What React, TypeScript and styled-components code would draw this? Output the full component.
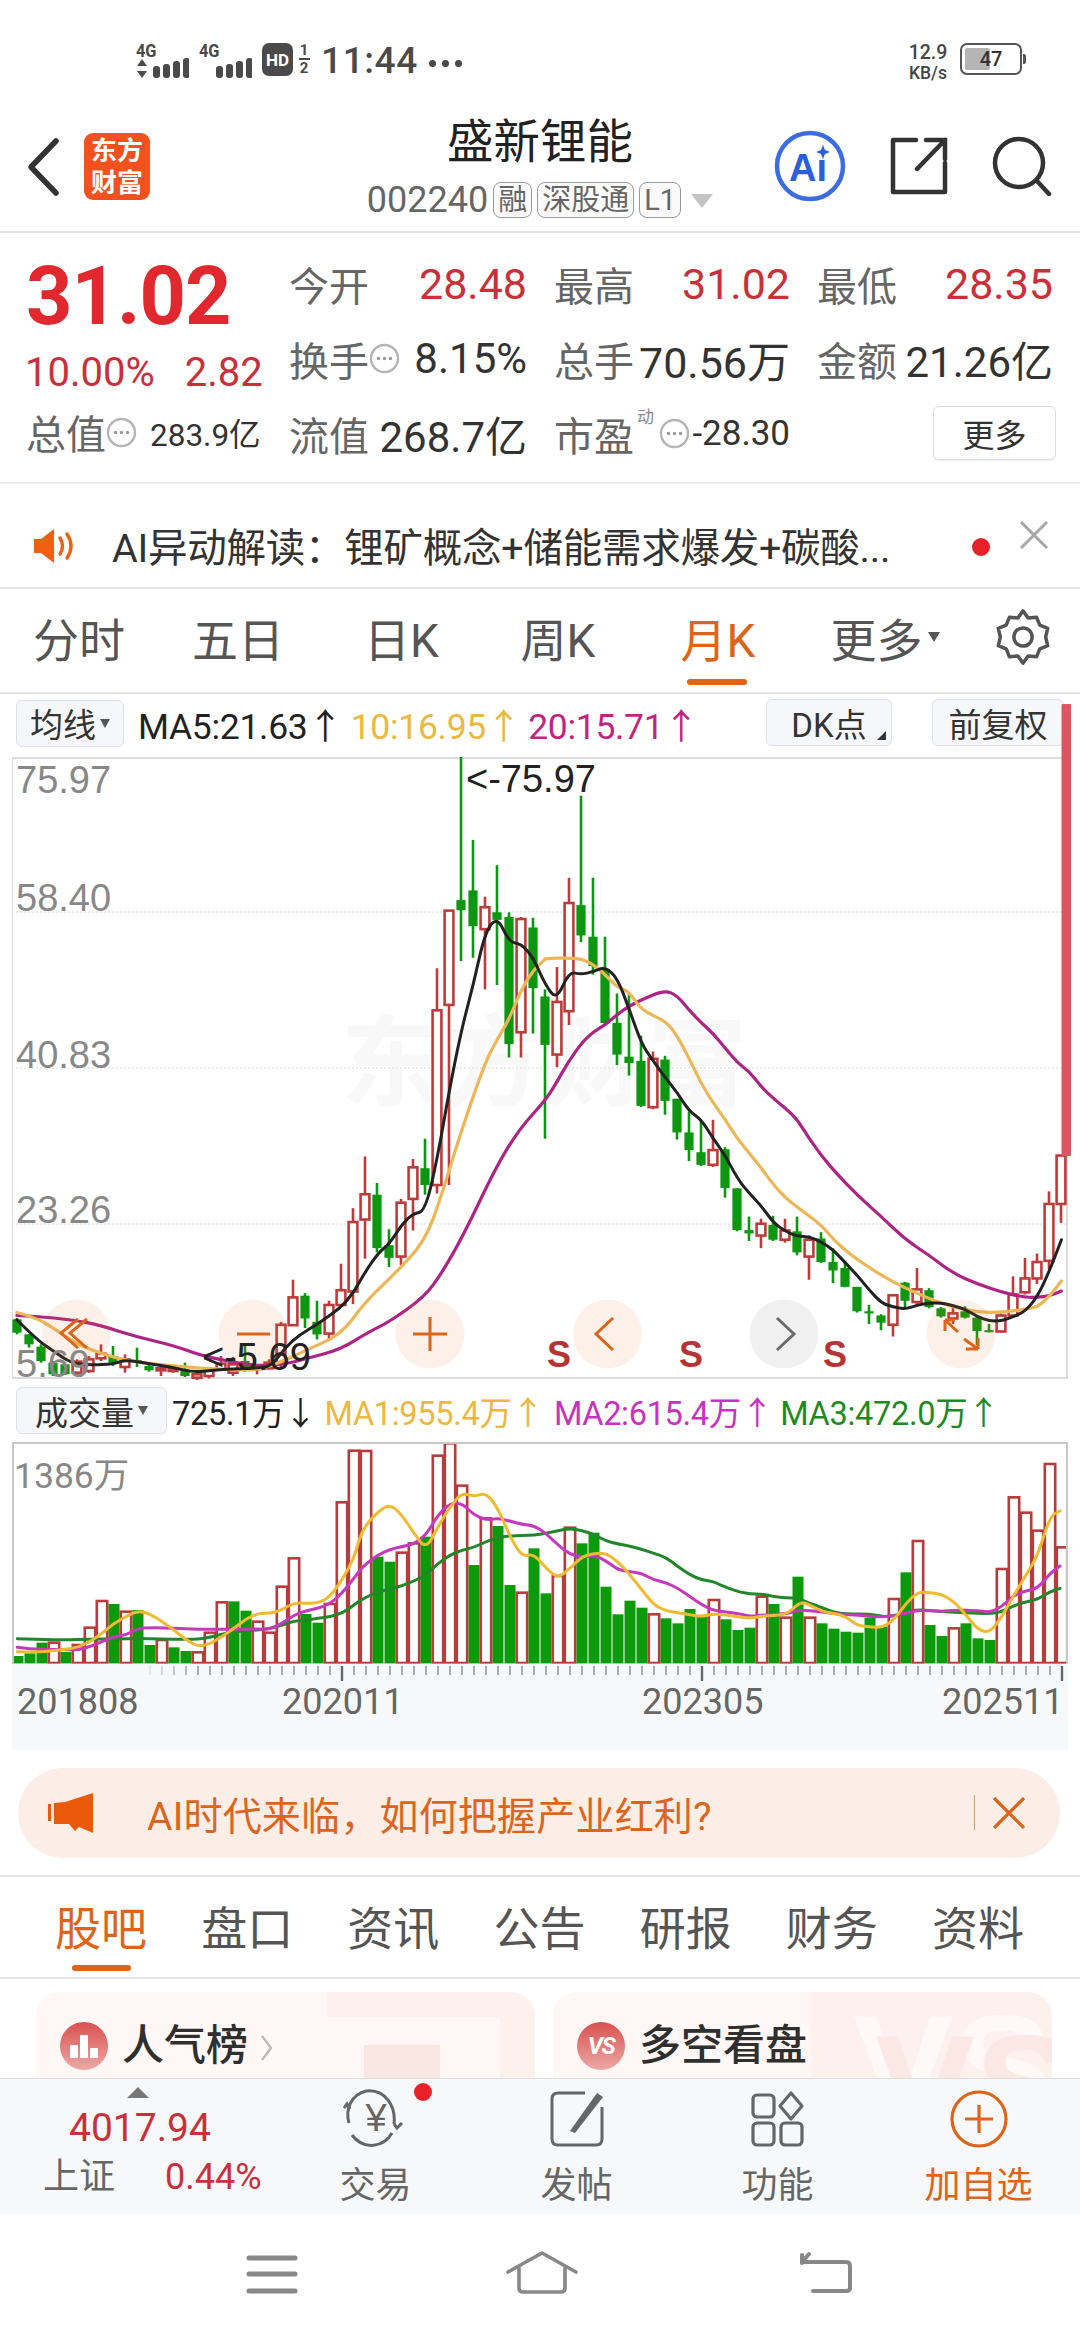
import React from 'react';
import styled, { createGlobalStyle } from 'styled-components';

const FONT = `Roboto, "Noto Sans CJK SC", sans-serif`;
const RED = '#C9303A';
const ORANGE = '#DD6418';

const Global = createGlobalStyle`
  html, body { margin: 0; padding: 0; background: #fff; }
  body { font-family: ${FONT}; overflow: hidden; }
  * { box-sizing: border-box; }
`;

/* ---------- chart data: values read off the picture ---------- */
type C = ['r' | 'g', number, number, number, number];
const z10 = (v: number) => 1280 + v / 3;
const z3 = (v: number) => 740 + v / 2.376;
const low: C[] = [
  ['g', 112, 115, 155, 160], ['g', 160, 160, 190, 200], ['g', 190, 197, 240, 245], ['g', 240, 245, 280, 285],
  ['g', 250, 250, 280, 282], ['r', 235, 242, 275, 285], ['r', 225, 235, 270, 275], ['r', 190, 218, 232, 240],
  ['g', 195, 225, 245, 255], ['r', 220, 235, 258, 275], ['g', 200, 237, 245, 258], ['g', 245, 255, 268, 272],
  ['r', 255, 262, 268, 285], ['r', 260, 262, 270, 275], ['g', 245, 265, 285, 288], ['r', 270, 280, 290, 297],
  ['r', 265, 268, 285, 292], ['r', 225, 248, 265, 268], ['r', 228, 250, 275, 285], ['g', 195, 240, 268, 272],
  ['r', 255, 258, 262, 280], ['r', 235, 245, 262, 265],
];
const high: C[] = [
  ['r', 1380, 1387, 1480, 1490], ['r', 1280, 1322, 1388, 1390], ['g', 1312, 1318, 1372, 1395], ['g', 1330, 1380, 1410, 1422],
  ['r', 1330, 1340, 1408, 1420], ['r', 1242, 1305, 1340, 1345], ['r', 1110, 1143, 1308, 1338], ['r', 987, 1077, 1137, 1230],
  ['g', 1050, 1078, 1205, 1215], ['g', 1160, 1198, 1228, 1250], ['r', 1088, 1097, 1225, 1245], ['r', 993, 1013, 1088, 1163],
  ['g', 945, 1015, 1055, 1078], ['r', 540, 640, 1055, 1075], ['r', 403, 403, 627, 1055], ['g', 38, 378, 402, 523],
  ['g', 235, 355, 440, 515], ['r', 370, 395, 447, 590], ['g', 295, 407, 425, 580], ['g', 407, 418, 720, 752],
  ['r', 418, 423, 692, 752], ['g', 420, 443, 587, 695], ['g', 590, 607, 722, 945], ['r', 537, 620, 745, 775],
  ['r', 325, 385, 642, 675], ['g', 130, 390, 462, 478], ['g', 325, 465, 535, 555], ['g', 465, 545, 670, 672],
  ['g', 600, 670, 745, 770], ['g', 600, 750, 765, 795], ['g', 700, 760, 867, 870], ['r', 738, 755, 870, 875],
  ['g', 748, 757, 855, 888], ['g', 850, 850, 930, 947], ['g', 880, 930, 972, 998], ['g', 900, 977, 1007, 1010],
  ['r', 900, 972, 1007, 1012], ['g', 965, 970, 1062, 1085], ['g', 1063, 1063, 1162, 1165], ['g', 1130, 1162, 1170, 1188],
  ['r', 1135, 1147, 1175, 1205], ['g', 1128, 1150, 1185, 1188], ['r', 1135, 1163, 1185, 1192], ['g', 1130, 1165, 1215, 1222],
  ['r', 1175, 1185, 1225, 1280], ['g', 1167, 1182, 1238, 1240], ['g', 1205, 1238, 1258, 1288], ['g', 1235, 1252, 1297, 1298],
  ['g', 1297, 1297, 1355, 1358], ['g', 1340, 1355, 1360, 1385], ['g', 1362, 1365, 1382, 1400], ['r', 1317, 1317, 1387, 1415],
  ['g', 1285, 1287, 1330, 1345], ['r', 1252, 1303, 1333, 1340], ['g', 1300, 1305, 1345, 1348], ['g', 1345, 1348, 1367, 1370],
  ['r', 1345, 1360, 1372, 1385], ['g', 1343, 1355, 1370, 1372], ['g', 1365, 1370, 1402, 1435], ['g', 1385, 1400, 1403, 1405],
  ['r', 1360, 1365, 1403, 1405], ['r', 1272, 1315, 1365, 1370], ['r', 1228, 1277, 1310, 1315], ['r', 1218, 1238, 1277, 1290],
  ['r', 1070, 1100, 1235, 1255], ['r', 985, 985, 1100, 1145],
];
const candles: C[] = [
  ...low.map(([t, a, b, c, d]) => [t, z10(a), z10(b), z10(c), z10(d)] as C),
  ...high.map(([t, a, b, c, d]) => [t, z3(a), z3(b), z3(c), z3(d)] as C),
];

type P = [number, number];
const left = (pts: P[]): P[] => pts.map(([x, y]) => [x / 2.8, z3(y)]);
const right = (pts: P[]): P[] => pts.map(([x, y]) => [520 + x / 2.8, z3(y)]);
const smooth = (pts: P[]) => {
  let d = `M${pts[0][0].toFixed(1)} ${pts[0][1].toFixed(1)}`;
  for (let i = 1; i < pts.length - 1; i++) {
    const mx = (pts[i][0] + pts[i + 1][0]) / 2;
    const my = (pts[i][1] + pts[i + 1][1]) / 2;
    d += ` Q${pts[i][0].toFixed(1)} ${pts[i][1].toFixed(1)} ${mx.toFixed(1)} ${my.toFixed(1)}`;
  }
  const e = pts[pts.length - 1];
  return `${d} L${e[0].toFixed(1)} ${e[1].toFixed(1)}`;
};

const ma5 = [
  ...left([[47,1375],[100,1420],[150,1450],[200,1478],[250,1483],[320,1480],[350,1470],[420,1480],[480,1487],[540,1500],[600,1495],[650,1492],[720,1490],[760,1485],[800,1440],[840,1410],[890,1385],[956,1345],[990,1310],[1020,1265],[1060,1215],[1090,1195],[1124,1150],[1157,1122],[1190,1118],[1225,990],[1258,830],[1291,690],[1325,580],[1358,455],[1392,417],[1426,478],[1460,482],[1493,515],[1527,580]]),
  ...right([[103,615],[137,548],[171,555],[204,548],[238,537],[272,562],[305,635],[340,720],[373,760],[407,800],[440,835],[474,880],[508,900],[541,945],[575,985],[609,1040],[642,1075],[676,1105],[710,1145],[743,1165],[777,1177],[810,1178],[844,1190],[878,1210],[911,1240],[945,1270],[978,1305],[1012,1335],[1045,1345],[1079,1350],[1112,1340],[1146,1335],[1180,1335],[1213,1342],[1247,1350],[1281,1368],[1314,1378],[1348,1378],[1381,1368],[1415,1355],[1449,1320],[1482,1260],[1516,1185]]),
];
const ma10 = [
  ...left([[47,1358],[100,1370],[150,1395],[200,1425],[250,1445],[320,1465],[400,1478],[480,1484],[560,1490],[650,1494],[720,1495],[790,1475],[850,1450],[956,1410],[1020,1335],[1100,1270],[1190,1190],[1240,1070],[1290,930],[1360,760],[1392,710],[1426,660],[1460,590],[1493,545],[1527,518]]),
  ...right([[70,517],[137,515],[171,518],[204,530],[238,555],[272,585],[305,595],[340,640],[407,665],[440,700],[474,755],[508,815],[541,860],[575,900],[609,945],[642,980],[676,1015],[710,1055],[743,1085],[777,1108],[844,1150],[878,1185],[911,1210],[945,1232],[1012,1270],[1079,1300],[1146,1325],[1213,1345],[1281,1357],[1348,1358],[1415,1350],[1449,1345],[1482,1320],[1516,1283]]),
];
const ma20 = [
  ...left([[47,1365],[100,1367],[200,1375],[280,1388],[380,1415],[490,1437],[560,1460],[650,1475],[720,1485],[800,1480],[860,1467],[956,1445],[1030,1405],[1090,1380],[1190,1320],[1240,1260],[1300,1170],[1390,1010],[1456,920]]),
  ...right([[70,855],[100,815],[137,760],[175,715],[204,692],[238,675],[272,650],[305,630],[340,615],[405,592],[440,605],[474,640],[508,670],[541,695],[575,730],[609,765],[642,785],[676,822],[710,850],[743,872],[777,900],[810,945],[844,985],[878,1020],[945,1080],[1012,1130],[1079,1185],[1146,1222],[1213,1265],[1281,1290],[1348,1310],[1415,1322],[1449,1322],[1482,1318],[1516,1307]]),
];

const volBars: ['r' | 'g', number][] = [
  ['g',648],['g',640],['g',608],['r',608],['g',636],['r',615],['r',563],['r',483],['g',492],['r',515],['g',510],['g',615],['r',600],['g',622],['g',633],['r',637],['r',578],['r',487],['g',484],['g',512],['r',545],['r',578],['r',440],['r',355],['g',522],['g',548],['r',492],['r',187],['r',32],
  ['r',33],['g',350],['g',365],['r',338],['r',310],['g',290],['r',47],['r',10],['r',137],['g',375],['r',235],['g',258],['g',435],['r',458],['g',325],['g',460],['r',408],['r',263],['g',310],['g',278],['g',440],['g',523],['g',482],['g',503],['r',523],['g',535],['g',550],['g',507],['g',530],['r',480],
  ['g',538],['g',570],['g',563],['r',470],['g',492],['r',533],['g',410],['r',533],['g',550],['g',566],['g',575],['g',578],['g',533],['g',560],['r',477],['g',397],['r',303],['g',555],['g',588],['r',565],['g',550],['g',595],['g',600],['r',387],['r',172],['r',218],['r',272],['r',72],['r',322],
];
const vz = (off: number, pts: P[]): P[] => pts.map(([x, y]) => [off + x / 3, 1440 + y / 3]);
const vma1 = [
  ...vz(0, [[52,635],[110,638],[180,630],[234,622],[270,605],[306,580],[342,550],[378,530],[414,512],[450,522],[486,545],[522,570],[558,600],[594,620],[630,612],[666,590],[702,565],[738,537],[774,520],[810,520],[846,510],[882,488],[918,490],[954,490],[990,470],[1026,420],[1062,355]]),
  ...vz(360, [[0,290],[18,255],[54,215],[90,192],[126,225],[162,280],[198,328],[234,260],[270,200],[306,158],[342,170],[378,158],[414,205],[450,290],[486,350],[522,342],[558,385],[594,415],[630,385],[666,350],[702,340],[738,340],[774,365],[810,405],[846,450],[882,495],[918,513],[954,518],[990,525],[1026,530],[1062,520]]),
  ...vz(720, [[54,530],[90,535],[126,528],[198,525],[234,492],[252,488],[270,495],[306,515],[342,520],[378,530],[414,558],[450,560],[486,563],[522,540],[558,490],[594,455],[630,458],[666,463],[702,485],[738,525],[774,570],[810,578],[846,530],[882,465],[918,405],[954,345],[990,228],[1020,213]]),
];
const vma2 = [
  ...vz(0, [[52,622],[90,628],[162,628],[234,630],[270,620],[306,605],[342,590],[378,585],[414,565],[450,563],[486,563],[558,567],[630,568],[702,568],[774,567],[810,568],[846,550],[882,525],[918,512],[954,505],[990,492],[1026,460],[1062,415]]),
  ...vz(360, [[0,390],[18,372],[54,345],[90,328],[126,320],[162,312],[198,285],[234,225],[270,190],[306,190],[342,225],[378,240],[414,235],[450,243],[486,253],[522,257],[558,280],[594,315],[630,343],[666,352],[702,345],[738,362],[774,390],[810,395],[846,400],[882,420],[918,428],[954,445],[990,470],[1026,495],[1062,512]]),
  ...vz(720, [[54,520],[90,530],[126,525],[198,522],[234,510],[306,515],[342,522],[414,525],[486,533],[558,520],[594,510],[666,515],[702,510],[774,512],[810,517],[846,500],[882,465],[918,452],[954,445],[990,400],[1020,378]]),
];
const vma3 = [
  ...vz(0, [[52,596],[126,598],[198,600],[270,597],[342,597],[414,595],[486,597],[558,598],[594,598],[630,592],[666,583],[702,575],[774,570],[810,565],[846,555],[882,543],[918,540],[954,535],[990,530],[1026,520],[1062,495]]),
  ...vz(360, [[0,482],[18,472],[54,455],[90,448],[126,437],[162,423],[198,405],[234,370],[270,345],[306,330],[342,322],[378,305],[414,293],[450,287],[486,287],[522,285],[558,280],[594,272],[630,265],[666,272],[702,283],[738,303],[774,312],[810,318],[846,328],[882,340],[918,352],[954,380],[990,405],[1026,420],[1062,425]]),
  ...vz(720, [[0,435],[54,455],[90,462],[126,462],[162,470],[198,473],[234,475],[270,490],[306,503],[342,517],[378,522],[450,522],[486,530],[522,528],[558,517],[594,508],[666,515],[738,518],[810,522],[846,515],[882,497],[918,485],[954,478],[990,455],[1020,445]]),
];

/* ---------- page skeleton ---------- */
const Page = styled.div`
  width: 1080px; height: 2340px; overflow: hidden; background: #fff; color: #222;
  display: flex; flex-direction: column;
`;

/* status bar */
const StatusBar = styled.div`
  height: 105px; display: flex; align-items: flex-start; padding: 43px 58px 0 136px; color: #4a4a4a;
`;
const Signal = styled.div`
  width: 53px; margin-right: 10px; display: flex; flex-direction: column; align-items: flex-start;
`;
const SignalLabel = styled.span`font-size: 19px; line-height: 15px; font-weight: 700; transform: scaleX(.86); transform-origin: left;`;
const HdBadge = styled.span`
  width: 31px; height: 33px; border-radius: 7px; background: #4a4a4a; color: #fff; font-size: 17px; font-weight: 700;
  display: flex; align-items: center; justify-content: center;
`;
const SimStack = styled.span`
  width: 16px; margin-left: 3px; margin-right: 9px; font-size: 15px; font-weight: 700; line-height: 15px; display: flex; flex-direction: column; align-items: center; height: 33px;
  & > i { width: 11px; height: 2px; background: #4a4a4a; margin: 1px 0; }
  & > span { line-height: 14px; }
`;
const Clock = styled.span`font-size: 37px; line-height: 33px; font-weight: 500; letter-spacing: .6px; margin-top: 1px;`;
const ClockDots = styled.span`display: flex; gap: 6px; margin: 17px 0 0 11px; & > i { width: 7px; height: 7px; border-radius: 50%; background: #4a4a4a; }`;
const StatusSpacer = styled.span`flex: 1;`;
const NetSpeed = styled.span`
  width: 46px; display: flex; flex-direction: column; align-items: center; font-size: 19.5px; line-height: 20px; margin-right: 9px; color: #444; font-weight: 500;
  & > small { font-size: 17.5px; line-height: 20px; }
`;
const Battery = styled.span`
  position: relative; width: 62px; height: 32px; border: 2px solid #555; border-radius: 7px; background: #fff; display: flex; align-items: center; justify-content: center;
  font-size: 20px; font-weight: 500; color: #333; overflow: visible;
  & > b { position: absolute; left: 3px; top: 3px; bottom: 3px; width: 25px; background: #b5b5b5; border-radius: 2px; }
  & > span { position: relative; }
  &::after { content: ''; position: absolute; right: -6px; top: 9px; width: 3px; height: 10px; background: #555; border-radius: 0 2px 2px 0; }
`;

/* header */
const Header = styled.header`
  height: 128px; border-bottom: 2px solid #e3e3e3; display: grid; grid-template-columns: 1fr auto 1fr; align-items: start;
`;
const HeaderLeft = styled.div`display: flex; align-items: flex-start; padding: 28px 0 0 26px; gap: 24px;`;
const Logo = styled.div`
  width: 66px; height: 67px; border-radius: 9px; background: #F4511E; color: #fff; font-size: 26px; line-height: 32px; font-weight: 700;
  display: flex; flex-direction: column; align-items: center; justify-content: center; letter-spacing: 0;
`;
const HeaderCenter = styled.div`display: flex; flex-direction: column; align-items: center; padding-top: 9px;`;
const Title = styled.h1`margin: 0; font-size: 46.5px; line-height: 56px; font-weight: 400; color: #222;`;
const SubRow = styled.div`display: flex; align-items: center; margin-top: 12px; height: 36px; color: #666; font-size: 36px;`;
const Tag = styled.span`
  height: 36px; margin-left: 5px; border: 1px solid #999; border-radius: 8px; padding: 0 4px; color: #666; font-size: 29px; line-height: 34px;
  background: #fafafa;
`;
const SubCaret = styled.i`
  margin-left: 10px; margin-top: 2px; width: 0; height: 0; border-left: 11px solid transparent; border-right: 11px solid transparent; border-top: 14px solid #c4c4c4;
`;
const HeaderRight = styled.div`display: flex; justify-content: flex-end; align-items: center; padding: 25px 28px 0 0; gap: 44px;`;

/* quote */
const Quote = styled.section`height: 251px; border-bottom: 2px solid #ececec; display: flex;`;
const QuoteLeft = styled.div`width: 289px; padding: 22px 0 0 26px; display: flex; flex-direction: column;`;
const BigPrice = styled.div`font-size: 81px; line-height: 84px; font-weight: 700; color: #E0282E; letter-spacing: -1px;`;
const ChangeRow = styled.div`display: flex; gap: 30px; margin-top: 12px; font-size: 40px; line-height: 44px; color: ${RED}; margin-left: -1px;`;
const CapRow = styled.div`display: flex; align-items: center; margin-top: 15px; height: 44px; color: #666; font-size: 40px;`;
const CapValue = styled.span`font-size: 31.5px; color: #333; margin-left: 13px; white-space: nowrap;`;
const QuoteGrid = styled.div`
  padding-top: 13px; display: grid; grid-template-columns: 238px 236px 236px; column-gap: 27px; grid-auto-rows: 75px; align-content: start;
`;
const Cell = styled.div`display: flex; align-items: center; justify-content: space-between; height: 75px;`;
const Lbl = styled.span`font-size: 40px; color: #666; white-space: nowrap;`;
const Val = styled.span<{ $red?: boolean; $size?: number }>`
  font-size: ${(p) => p.$size ?? 42}px; color: ${(p) => (p.$red ? RED : '#333')}; white-space: nowrap;
`;
const LabelWrap = styled.span`position: relative; display: flex; align-items: center;`;
const Sup = styled.sup`
  position: absolute; left: 83px; top: 3px; font-size: 17px; line-height: 18px; color: #888;
`;
const InfoSlot = styled.span`margin-left: 25px; display: flex;`;
const MoreBtn = styled.div`
  position: absolute; left: 933px; top: 406px; width: 123px; height: 54px; border: 1px solid #ddd; border-radius: 6px; background: #fff; color: #333; font-size: 32px;
  display: flex; align-items: center; justify-content: center; box-shadow: 0 1px 1px #eee;
`;

/* alert */
const Alert = styled.section`
  height: 105px; border-bottom: 2px solid #e6e6e6; display: flex; align-items: center; padding: 20px 0 0 34px; position: relative;
`;
const AlertText = styled.span`margin-left: 34px; font-size: 39.5px; color: #333; white-space: nowrap; margin-top: -2px; letter-spacing: -.25px;`;
const AlertDot = styled.i`
  position: absolute; left: 972px; top: 54px; width: 18px; height: 18px; border-radius: 50%; background: #E8202A;
`;
const AlertClose = styled.span`position: absolute; left: 1019px; top: 37px; display: flex;`;

/* period tabs */
const Periods = styled.nav`
  height: 105px; border-bottom: 2px solid #e3e3e3; display: grid; grid-template-columns: 158px 160px 167px 146px 174px 160px 115px;
`;
const Period = styled.div<{ $active?: boolean }>`
  position: relative; display: flex; align-items: center; justify-content: center; padding-bottom: 8px; font-size: 46px; color: ${(p) => (p.$active ? ORANGE : '#555')};
  ${(p) => p.$active && `&::after { content: ''; position: absolute; left: 50%; margin-left: -31px; bottom: 7px; width: 60px; height: 6px; border-radius: 3px; background: ${ORANGE}; }`}
`;
const PeriodCaret = styled.i`
  margin-left: 5px; width: 0; height: 0; border-left: 6px solid transparent; border-right: 6px solid transparent; border-top: 10px solid #555;
`;

/* indicator rows */
const IndRow = styled.div<{ $pb?: number }>`
  height: 63px; display: flex; align-items: center; padding: 0 0 ${(p) => p.$pb ?? 0}px 16px; position: relative; white-space: nowrap;
`;
const SelectBtn = styled.div<{ $w: number }>`
  width: ${(p) => p.$w}px; height: 47px; border: 1px solid #dfe1e6; border-radius: 6px; background: #f6f7fa; display: flex; align-items: center; justify-content: center; gap: 4px;
  font-size: 33px; color: #333;
`;
const MiniCaret = styled.i`width: 0; height: 0; border-left: 5px solid transparent; border-right: 5px solid transparent; border-top: 9px solid #555;`;
const IndText = styled.span<{ $c: string; $ml: number; $size: number }>`
  color: ${(p) => p.$c}; margin-left: ${(p) => p.$ml}px; font-size: ${(p) => p.$size}px; letter-spacing: -.3px;
`;
const IndRight = styled.div`position: absolute; left: 766px; top: 5px; display: flex; gap: 40px;`;
const FlagBtn = styled.div<{ $w: number }>`
  position: relative; width: ${(p) => p.$w}px; height: 47px; border: 1px solid #dfe1e6; border-radius: 6px; background: #f6f7fa; color: #333; font-size: 33px;
  display: flex; align-items: center; justify-content: center; 
`;
const CornerMark = styled.i`
  position: absolute; right: 5px; bottom: 5px; width: 0; height: 0; border-left: 9px solid transparent; border-bottom: 9px solid #333;
`;

/* charts */
const ChartBox = styled.div`
  position: relative; z-index: 2; margin-left: 12px; width: 1056px; height: 622px; border: 1px solid #dcdcdc; border-width: 2px 2px 2px 1px;
  & > svg { position: absolute; left: -1px; top: -2px; overflow: visible; }
`;
const Watermark = styled.div`
  position: absolute; left: 328px; top: 245px; font-size: 100px; line-height: 120px; font-weight: 700; color: #f8f8f8; white-space: nowrap; letter-spacing: 2px;
`;
const AxisLabel = styled.span<{ $y: number }>`
  position: absolute; left: 3px; top: ${(p) => p.$y}px; transform: translateY(-50%); font-size: 38px; color: #888; line-height: 1; font-family: "Liberation Sans", ${FONT};
`;
const Extreme = styled.span<{ $x: number; $y: number }>`
  position: absolute; left: ${(p) => p.$x}px; top: ${(p) => p.$y}px; transform: translateY(-50%); font-size: 38px; line-height: 1; color: #222; white-space: nowrap; font-family: "Liberation Sans", ${FONT};
`;
const SMark = styled.span<{ $x: number }>`
  position: absolute; left: ${(p) => p.$x}px; top: 578px; font-size: 36px; line-height: 36px; font-weight: 700; color: #B73434; font-family: "Liberation Sans", ${FONT};
`;
const VolBox = styled.div`
  position: relative; margin-left: 12px; width: 1056px; height: 222px; border: 1px solid #c8c8c8; border-width: 2px 2px 0 2px; overflow: hidden;
  & > svg { position: absolute; left: -2px; top: -2px; }
`;
const VolMax = styled.span`position: absolute; left: 0; top: 13px; font-size: 35.5px; line-height: 38px; color: #888;`;
const AxisBand = styled.div`position: relative; margin-left: 12px; width: 1056px; height: 86px; background: #f7f8fa; & > svg { position: absolute; left: 0; top: 0; }`;
const AxisDate = styled.span<{ $x: number }>`position: absolute; left: ${(p) => p.$x}px; top: 18px; font-size: 36px; line-height: 40px; color: #666;`;

/* banner */
const Banner = styled.div`
  margin: 18px 20px 0 18px; height: 90px; border-radius: 45px; background: #FCEEE6; display: flex; align-items: center; padding-left: 30px; position: relative;
`;
const BannerText = styled.span`margin-left: 53px; font-size: 39px; color: #DB651F; white-space: nowrap; letter-spacing: .2px;`;
const BannerRule = styled.i`position: absolute; left: 956px; top: 27px; width: 1px; height: 35px; background: #c9a080;`;
const BannerClose = styled.span`position: absolute; left: 974px; top: 29px; display: flex;`;

/* section tabs */
const Sections = styled.nav`
  margin-top: 17px; height: 104px; border-top: 2px solid #e6e6e6; border-bottom: 2px solid #e6e6e6; display: grid; grid-template-columns: repeat(7, 1fr); padding: 0 29px 0 28px;
`;
const SectionTab = styled.div<{ $active?: boolean }>`
  position: relative; display: flex; align-items: center; justify-content: center; padding-bottom: 5px; font-size: 46px; color: ${(p) => (p.$active ? ORANGE : '#555')};
  ${(p) => p.$active && `&::after { content: ''; position: absolute; left: 50%; margin-left: -29px; bottom: 6px; width: 59px; height: 6px; border-radius: 3px; background: ${ORANGE}; }`}
`;

/* cards */
const Cards = styled.div`height: 99px; padding: 13px 28px 0 36px; display: flex; gap: 18px; overflow: hidden;`;
const Card = styled.div<{ $split: number }>`
  position: relative; flex: 1; height: 120px; border-radius: 24px; overflow: hidden; display: flex; align-items: flex-start; padding: 30px 0 0 24px;
  background: linear-gradient(to right, #FEF7F5 ${(p) => p.$split}px, #FDF1EE ${(p) => p.$split}px);
`;
const CardDecorBlock = styled.i`position: absolute; right: 35px; top: 25px; width: 191px; height: 100px; background: #FEF7F5;
  &::after { content: ''; position: absolute; left: 55px; top: 28px; width: 76px; height: 70px; background: #FAE6E3; }
`;
const CardGhost = styled.span<{ $x: number; $y: number; $c: string }>`
  position: absolute; left: ${(p) => p.$x}px; top: ${(p) => p.$y}px; font-size: 150px; line-height: 150px; font-weight: 700; color: ${(p) => p.$c}; font-family: "Liberation Sans", sans-serif;
`;
const CardIcon = styled.span`
  position: relative; width: 48px; height: 48px; border-radius: 50%; background: linear-gradient(#D9504F, #ECA9A5); color: #fff; display: flex; align-items: center; justify-content: center; font-size: 24px; font-weight: 700; font-style: italic; letter-spacing: -1.5px;
`;
const CardTitle = styled.span`position: relative; margin: -4px 0 0 14px; font-size: 42px; line-height: 56px; font-weight: 500; color: #2f2f2f;`;
const CardChevron = styled.span`position: relative; margin: 12px 0 0 12px; display: flex;`;

/* bottom bar */
const Dock = styled.footer`
  height: 136px; background: #f7f8fa; border-top: 1px solid #dcdcdc; display: grid; grid-template-columns: 275px repeat(4, 201px);
`;
const IndexCol = styled.div`padding: 8px 0 0 43px; display: flex; flex-direction: column;`;
const IndexCaret = styled.i`margin: 0 0 0 84px; width: 0; height: 0; border-left: 11px solid transparent; border-right: 11px solid transparent; border-bottom: 11px solid #777;`;
const IndexValue = styled.span`margin: 7px 0 0 26px; font-size: 39px; line-height: 46px; color: ${RED};`;
const IndexRow = styled.span`display: flex; margin-top: 4px; font-size: 36px; line-height: 44px; color: #666; & > b { font-weight: 400; color: ${RED}; margin-left: 50px; }`;
const DockItem = styled.div<{ $active?: boolean }>`
  position: relative; display: flex; flex-direction: column; align-items: center; padding-top: 10px; font-size: 36px; line-height: 40px; color: ${(p) => (p.$active ? ORANGE : '#666')};
  & > svg { height: 60px; margin-bottom: 17px; display: block; }
`;
const DockDot = styled.i`position: absolute; left: 139px; top: 4px; width: 18px; height: 18px; border-radius: 50%; background: #E8202A;`;

/* system nav */
const SysNav = styled.div`flex: 1; position: relative; display: grid; grid-template-columns: 246px 260px 293px 1fr; padding-top: 40px; align-items: start;`;
const SysCell = styled.span`display: flex;`;

/* ---------- small drawings ---------- */
const Bars = ({ arrows }: { arrows?: boolean }) => (
  <svg width="53" height="20" viewBox="0 0 53 20">
    {arrows && (<g fill="#4a4a4a"><path d="M6 1l5 7H1zM6 20l5-7H1z" /></g>)}
    {[[17, 12], [27, 14], [37, 17], [47, 20]].map(([x, h]) => (
      <rect key={x} x={x} y={20 - h} width="7" height={h} rx="3" fill="#4a4a4a" />
    ))}
  </svg>
);
const Info = () => (
  <svg width="31" height="31" viewBox="0 0 31 31" fill="none">
    <circle cx="15.5" cy="15.5" r="13.5" stroke="#b5b5b5" strokeWidth="2.4" />
    <g fill="#999"><circle cx="9.5" cy="15.5" r="1.7" /><circle cx="15.5" cy="15.5" r="1.7" /><circle cx="21.5" cy="15.5" r="1.7" /></g>
  </svg>
);

const CandleChart = () => (
  <svg width="1056" height="622" viewBox="12 756 1056 622">
    {[911, 1067, 1223].map((y) => (
      <line key={y} x1="12" x2="1067" y1={y} y2={y} stroke="#d8d8d8" strokeDasharray="2 2" />
    ))}
    {candles.map(([t, wt, bt, bb, wb], i) => {
      const x = 17 + 12 * i;
      const c = t === 'r' ? '#BC3C3C' : '#0D960F';
      return (
        <g key={i}>
          <line x1={x} x2={x} y1={wt} y2={bt + 1} stroke={c} strokeWidth="2.6" />
          <line x1={x} x2={x} y1={bb - 1} y2={wb} stroke={c} strokeWidth="2.6" />
          {t === 'r' ? (
            <rect x={x - 4.4} y={bt} width="8.8" height={Math.max(bb - bt, 2)} fill="#fff" stroke={c} strokeWidth="2.6" />
          ) : (
            <rect x={x - 4.6} y={bt} width="9.2" height={Math.max(bb - bt, 2)} fill={c} />
          )}
        </g>
      );
    })}
    <path d={smooth(ma20)} fill="none" stroke="#AE2484" strokeWidth="3.2" strokeLinejoin="round" strokeLinecap="round" />
    <path d={smooth(ma10)} fill="none" stroke="#EDB757" strokeWidth="3.2" strokeLinejoin="round" strokeLinecap="round" />
    <path d={smooth(ma5)} fill="none" stroke="#222" strokeWidth="3" strokeLinejoin="round" strokeLinecap="round" />
    <rect x="1061.5" y="703" width="9.5" height="452" rx="1" fill="#DB5660" />
    {[76, 253, 430, 607.5, 961].map((x) => (
      <circle key={x} cx={x} cy="1333" r="34.5" fill="#F0692C" fillOpacity=".1" />
    ))}
    <circle cx="784" cy="1333" r="34.5" fill="#888" fillOpacity=".13" />
    <g fill="none" stroke="#DD6418" strokeWidth="3">
      <path d="M78 1318l-17 14 17 15M87 1318l-17 14 17 15" />
      <path d="M237 1333h33" />
      <path d="M413 1333h34M430 1316v34" />
      <path d="M613 1317l-17 16 17 16" />
      <path d="M945 1319l13 12M945 1319h10M945 1319v11M978 1348l-14-10M978 1348h-12M978 1348v-11" />
    </g>
    <path d="M777 1317l17 16-17 16" fill="none" stroke="#6b6b6b" strokeWidth="3" />
  </svg>
);

const VolumeChart = () => (
  <svg width="1056" height="222" viewBox="12 1442 1056 222">
    {volBars.map(([t, top], i) => {
      const x = 18 + 12 * i;
      const y = 1440 + top / 3;
      return t === 'r' ? (
        <rect key={i} x={x - 5.2} y={y} width="10.4" height={1663 - y} fill="#fff" stroke="#BA3B3B" strokeWidth="2.6" />
      ) : (
        <rect key={i} x={x - 5.5} y={y} width="11" height={1663.5 - y} fill="#0A9A0A" />
      );
    })}
    <line x1="12" x2="1067" y1="1664" y2="1664" stroke="#b9d9b9" strokeWidth="1" />
    <path d={smooth(vma3)} fill="none" stroke="#22862A" strokeWidth="3" strokeLinecap="round" />
    <path d={smooth(vma2)} fill="none" stroke="#C638BE" strokeWidth="3" strokeLinecap="round" />
    <path d={smooth(vma1)} fill="none" stroke="#F0BB30" strokeWidth="3" strokeLinecap="round" />
  </svg>
);

const ticks = Array.from({ length: 78 }, (_, i) => 150 + 12 * i);
const AxisTicks = () => (
  <svg width="1056" height="20" viewBox="12 1664 1056 20">
    {ticks.map((x, i) => (
      <line key={x} x1={x} x2={x} y1="1666" y2="1675" stroke="#777" strokeOpacity={i < 4 ? 0.25 + i * 0.2 : 1} strokeWidth="1.2" />
    ))}
    {[342, 702, 1062].map((x) => (
      <line key={x} x1={x} x2={x} y1="1666" y2="1681" stroke="#666" strokeWidth="2.4" />
    ))}
  </svg>
);

const IND_SIZE = 35.5;
const VOL_SIZE = 32.5;

export default function App() {
  return (
    <Page>
      <Global />
      <StatusBar>
        <Signal><SignalLabel>4G</SignalLabel><Bars arrows /></Signal>
        <Signal><SignalLabel>4G</SignalLabel><Bars /></Signal>
        <HdBadge>HD</HdBadge>
        <SimStack><span>1</span><i /><span>2</span></SimStack>
        <Clock>11:44</Clock>
        <ClockDots><i /><i /><i /></ClockDots>
        <StatusSpacer />
        <NetSpeed>12.9<small>KB/s</small></NetSpeed>
        <Battery><b /><span>47</span></Battery>
      </StatusBar>

      <Header>
        <HeaderLeft>
          <svg width="34" height="60" viewBox="0 0 34 60" style={{ marginTop: 4 }}>
            <path d="M30 4L5 30l25 26" fill="none" stroke="#333" strokeWidth="5.5" strokeLinecap="round" strokeLinejoin="round" />
          </svg>
          <Logo><span>东方</span><span>财富</span></Logo>
        </HeaderLeft>
        <HeaderCenter>
          <Title>盛新锂能</Title>
          <SubRow>
            002240<Tag>融</Tag><Tag>深股通</Tag><Tag>L1</Tag><SubCaret />
          </SubRow>
        </HeaderCenter>
        <HeaderRight>
          <svg width="72" height="72" viewBox="0 0 72 72">
            <circle cx="36" cy="36" r="33" fill="#fff" stroke="#3C6CE0" strokeWidth="4.5" />
            <text x="15" y="51" fontFamily="Liberation Sans, sans-serif" fontSize="38" fontWeight="700" fill="#2D5FDB">Aı</text>
            <path d="M49 15l2 5 5 2-5 2-2 5-2-5-5-2 5-2z" fill="#2D5FDB" />
          </svg>
          <svg width="58" height="58" viewBox="0 0 58 58" fill="none" stroke="#333" strokeWidth="4.5">
            <path d="M26 3H3v52h52V26" strokeLinecap="round" strokeLinejoin="round" />
            <path d="M27 32L55 3M36 3h19v19" strokeLinecap="round" />
          </svg>
          <svg width="60" height="60" viewBox="0 0 60 60" fill="none" stroke="#333" strokeWidth="4.5">
            <circle cx="27" cy="27" r="24" />
            <path d="M45 45l12 13" strokeLinecap="round" />
          </svg>
        </HeaderRight>
      </Header>

      <Quote>
        <QuoteLeft>
          <BigPrice>31.02</BigPrice>
          <ChangeRow><span>10.00%</span><span>2.82</span></ChangeRow>
          <CapRow>总值<Info /><CapValue>283.9亿</CapValue></CapRow>
        </QuoteLeft>
        <QuoteGrid>
          <Cell><Lbl>今开</Lbl><Val $red $size={43}>28.48</Val></Cell>
          <Cell><Lbl>最高</Lbl><Val $red $size={43}>31.02</Val></Cell>
          <Cell><Lbl>最低</Lbl><Val $red $size={43}>28.35</Val></Cell>
          <Cell><LabelWrap><Lbl>换手</Lbl><Info /></LabelWrap><Val>8.15%</Val></Cell>
          <Cell><Lbl>总手</Lbl><Val $size={43}>70.56万</Val></Cell>
          <Cell><Lbl>金额</Lbl><Val>21.26亿</Val></Cell>
          <Cell><Lbl>流值</Lbl><Val>268.7亿</Val></Cell>
          <Cell><LabelWrap><Lbl>市盈</Lbl><Sup>动</Sup><InfoSlot><Info /></InfoSlot></LabelWrap><Val $size={35}>-28.30</Val></Cell>
        </QuoteGrid>
      </Quote>
      <MoreBtn>更多</MoreBtn>

      <Alert>
        <svg width="44" height="34" viewBox="0 0 44 34">
          <path d="M0 10h7l13-10v34L7 24H0z" fill="#F2600F" />
          <path d="M26 9q5 8 0 16M33 5q8 12 0 24" fill="none" stroke="#F2600F" strokeWidth="3.4" strokeLinecap="round" />
        </svg>
        <AlertText>AI异动解读：锂矿概念+储能需求爆发+碳酸...</AlertText>
        <AlertDot />
        <AlertClose>
          <svg width="30" height="28" viewBox="0 0 30 28"><path d="M2 1l26 26M28 1L2 27" stroke="#a8a8a8" strokeWidth="3" /></svg>
        </AlertClose>
      </Alert>

      <Periods>
        <Period>分时</Period>
        <Period>五日</Period>
        <Period>日K</Period>
        <Period>周K</Period>
        <Period $active>月K</Period>
        <Period>更多<PeriodCaret /></Period>
        <Period>
          <svg width="56" height="56" viewBox="0 0 24 24" fill="none" stroke="#555" strokeWidth="1.5" strokeLinejoin="round">
            <path d="M12 .8l2.2 3.1 3.6-.4 1.4 3.4 3.4 1.4-.9 3.7.9 3.7-3.4 1.4-1.4 3.4-3.6-.4-2.2 3.1-2.2-3.1-3.6.4-1.4-3.4-3.4-1.4.9-3.7-.9-3.7 3.4-1.4 1.4-3.4 3.6.4z" />
            <circle cx="12" cy="12" r="3.9" />
          </svg>
        </Period>
      </Periods>

      <IndRow $pb={5}>
        <SelectBtn $w={108}>均线<MiniCaret /></SelectBtn>
        <IndText $c="#222" $ml={14} $size={IND_SIZE}>MA5:21.63↑</IndText>
        <IndText $c="#EDB840" $ml={8} $size={IND_SIZE}>10:16.95↑</IndText>
        <IndText $c="#C0267F" $ml={7} $size={IND_SIZE}>20:15.71↑</IndText>
        <IndRight>
          <FlagBtn $w={126}>DK点<CornerMark /></FlagBtn>
          <FlagBtn $w={132}>前复权</FlagBtn>
        </IndRight>
      </IndRow>

      <ChartBox>
        <Watermark>东方财富</Watermark>
        <CandleChart />
        <AxisLabel $y={21}>75.97</AxisLabel>
        <AxisLabel $y={139}>58.40</AxisLabel>
        <AxisLabel $y={296}>40.83</AxisLabel>
        <AxisLabel $y={451}>23.26</AxisLabel>
        <AxisLabel $y={605}>5.69</AxisLabel>
        <Extreme $x={453} $y={20}>&lt;-75.97</Extreme>
        <Extreme $x={189} $y={598}>&lt;-5.69</Extreme>
        <SMark $x={534}>S</SMark>
        <SMark $x={666}>S</SMark>
        <SMark $x={810}>S</SMark>
      </ChartBox>

      <IndRow>
        <SelectBtn $w={151}>成交量 <MiniCaret /></SelectBtn>
        <IndText $c="#222" $ml={5} $size={VOL_SIZE}>725.1万↓</IndText>
        <IndText $c="#EDB840" $ml={8} $size={VOL_SIZE}>MA1:955.4万↑</IndText>
        <IndText $c="#C832C0" $ml={10} $size={VOL_SIZE}>MA2:615.4万↑</IndText>
        <IndText $c="#1F8A1F" $ml={7} $size={VOL_SIZE}>MA3:472.0万↑</IndText>
      </IndRow>

      <VolBox>
        <VolumeChart />
        <VolMax>1386万</VolMax>
      </VolBox>
      <AxisBand>
        <AxisTicks />
        <AxisDate $x={5}>201808</AxisDate>
        <AxisDate $x={270}>202011</AxisDate>
        <AxisDate $x={630}>202305</AxisDate>
        <AxisDate $x={930}>202511</AxisDate>
      </AxisBand>

      <Banner>
        <svg width="46" height="40" viewBox="0 0 46 40">
          <path d="M0 11h3v17H0zM6 10l11-1L45 0v40L31 34l-4 4-6-7H6z" fill="#EB5A0A" />
        </svg>
        <BannerText>AI时代来临，如何把握产业红利?</BannerText>
        <BannerRule />
        <BannerClose>
          <svg width="34" height="32" viewBox="0 0 34 32"><path d="M2 1l30 30M32 1L2 31" stroke="#DD6418" strokeWidth="3.2" /></svg>
        </BannerClose>
      </Banner>

      <Sections>
        <SectionTab $active>股吧</SectionTab>
        <SectionTab>盘口</SectionTab>
        <SectionTab>资讯</SectionTab>
        <SectionTab>公告</SectionTab>
        <SectionTab>研报</SectionTab>
        <SectionTab>财务</SectionTab>
        <SectionTab>资料</SectionTab>
      </Sections>

      <Cards>
        <Card $split={291}>
          <CardDecorBlock />
          <CardIcon>
            <svg width="30" height="26" viewBox="0 0 30 26" fill="#fff"><rect x="1" y="12" width="8" height="13" rx="1" /><rect x="11" y="2" width="8" height="23" rx="1" /><rect x="21" y="15" width="8" height="10" rx="1" /></svg>
          </CardIcon>
          <CardTitle>人气榜</CardTitle>
          <CardChevron>
            <svg width="13" height="28" viewBox="0 0 13 28"><path d="M2 2l9 12-9 12" fill="none" stroke="#bbb" strokeWidth="2.4" /></svg>
          </CardChevron>
        </Card>
        <Card $split={258}>
          <CardGhost $x={300} $y={1} $c="#FEF8F6">VS</CardGhost>
          <CardGhost $x={322} $y={21} $c="#FBE8E5">VS</CardGhost>
          <CardIcon>VS</CardIcon>
          <CardTitle>多空看盘</CardTitle>
        </Card>
      </Cards>

      <Dock>
        <IndexCol>
          <IndexCaret />
          <IndexValue>4017.94</IndexValue>
          <IndexRow>上证<b>0.44%</b></IndexRow>
        </IndexCol>
        <DockItem>
          <svg width="68" height="60" viewBox="0 0 68 60" fill="none" stroke="#666" strokeWidth="3">
            <path d="M24 2C9 6 3 20 7 34" />
            <path d="M2 19l3-4 3 5" />
            <path d="M24 2c20-2 30 16 28 33" />
            <path d="M50 44C42 58 22 62 10 46" />
            <path d="M52 35l3 4 5-5" />
            <text x="34" y="42" textAnchor="middle" fontSize="38" fill="#666" stroke="none" fontFamily="Liberation Sans, sans-serif">¥</text>
          </svg>
          <DockDot />
          交易
        </DockItem>
        <DockItem>
          <svg width="58" height="60" viewBox="0 0 58 60" fill="none" stroke="#666" strokeWidth="3">
            <path d="M37 4H10Q4 4 4 10v40q0 6 6 6h38q6 0 6-6V18" />
            <path d="M22 42L49 4l6 4-28 36z" fill="#666" stroke="none" />
          </svg>
          发帖
        </DockItem>
        <DockItem>
          <svg width="54" height="60" viewBox="0 0 54 60" fill="none" stroke="#666" strokeWidth="3.2">
            <rect x="2" y="6" width="21" height="22" rx="4" />
            <rect x="2" y="34" width="21" height="22" rx="4" />
            <rect x="30" y="34" width="21" height="22" rx="4" />
            <path d="M40 4l11 13-11 13-11-13z" strokeLinejoin="round" />
          </svg>
          功能
        </DockItem>
        <DockItem $active>
          <svg width="60" height="60" viewBox="0 0 60 60" fill="none" stroke="#DD6418" strokeWidth="3.2">
            <circle cx="30" cy="30" r="27" />
            <path d="M16 30h28M30 16v28" />
          </svg>
          加自选
        </DockItem>
      </Dock>

      <SysNav>
        <span />
        <SysCell>
          <svg width="52" height="40" viewBox="0 0 52 40" stroke="#888" strokeWidth="5" strokeLinecap="round"><path d="M3 4h46M3 20h46M3 37h46" /></svg>
        </SysCell>
        <SysCell>
          <svg width="72" height="44" viewBox="0 0 72 44" fill="none" stroke="#888" strokeWidth="3.6" strokeLinejoin="round" strokeLinecap="round" style={{ marginTop: -3 }}>
            <path d="M2 21L36 2l34 19" />
            <path d="M13 17v20q0 4 4 4h38q4 0 4-4V17" />
          </svg>
        </SysCell>
        <SysCell>
          <svg width="54" height="42" viewBox="0 0 54 42" fill="none" stroke="#888" strokeWidth="4" strokeLinecap="round" strokeLinejoin="round" style={{ marginTop: -3 }}>
            <path d="M10 3L3 11h44q4 0 4 4v22q0 3-4 3H14" />
            <path d="M3 4v8" />
          </svg>
        </SysCell>
      </SysNav>
    </Page>
  );
}
